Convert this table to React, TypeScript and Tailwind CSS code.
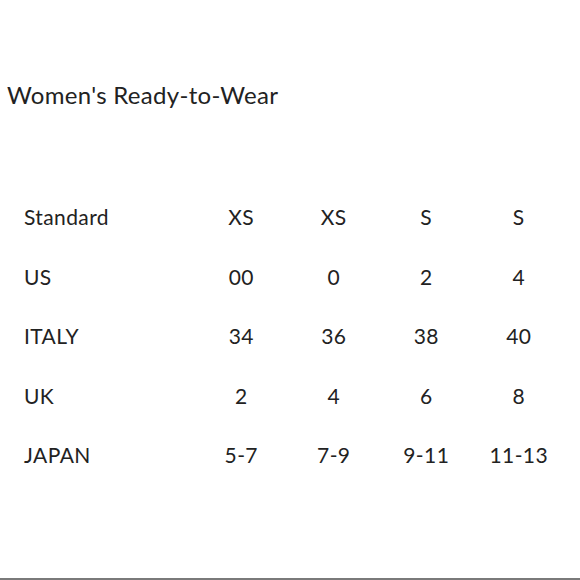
const rows = [
  ["Standard", "XS", "XS", "S", "S"],
  ["US", "00", "0", "2", "4"],
  ["ITALY", "34", "36", "38", "40"],
  ["UK", "2", "4", "6", "8"],
  ["JAPAN", "5-7", "7-9", "9-11", "11-13"],
];

export default function App() {
  return (
    <div
      className="w-[580px] h-[580px] bg-white text-[#222222] flex flex-col"
      style={{ fontFamily: "Lato, 'Open Sans', sans-serif" }}
    >
      <h1 className="pl-[7px] pt-[80px] text-[24px] leading-[30px] font-normal tracking-[0.3px]">
        Women's Ready-to-Wear
      </h1>
      <div className="mt-[77px] pl-[24px] flex flex-col">
        {rows.map((row, i) => (
          <div
            key={i}
            className="flex items-center h-[59.5px] text-[21px] font-normal tracking-[0.4px]"
          >
            <div className="w-[171px]">{row[0]}</div>
            {row.slice(1).map((v, j) => (
              <div key={j} className="w-[92.5px] text-center">
                {v}
              </div>
            ))}
          </div>
        ))}
      </div>
      <div className="mt-auto h-[2px] bg-[#7a7a7a]" />
    </div>
  );
}
